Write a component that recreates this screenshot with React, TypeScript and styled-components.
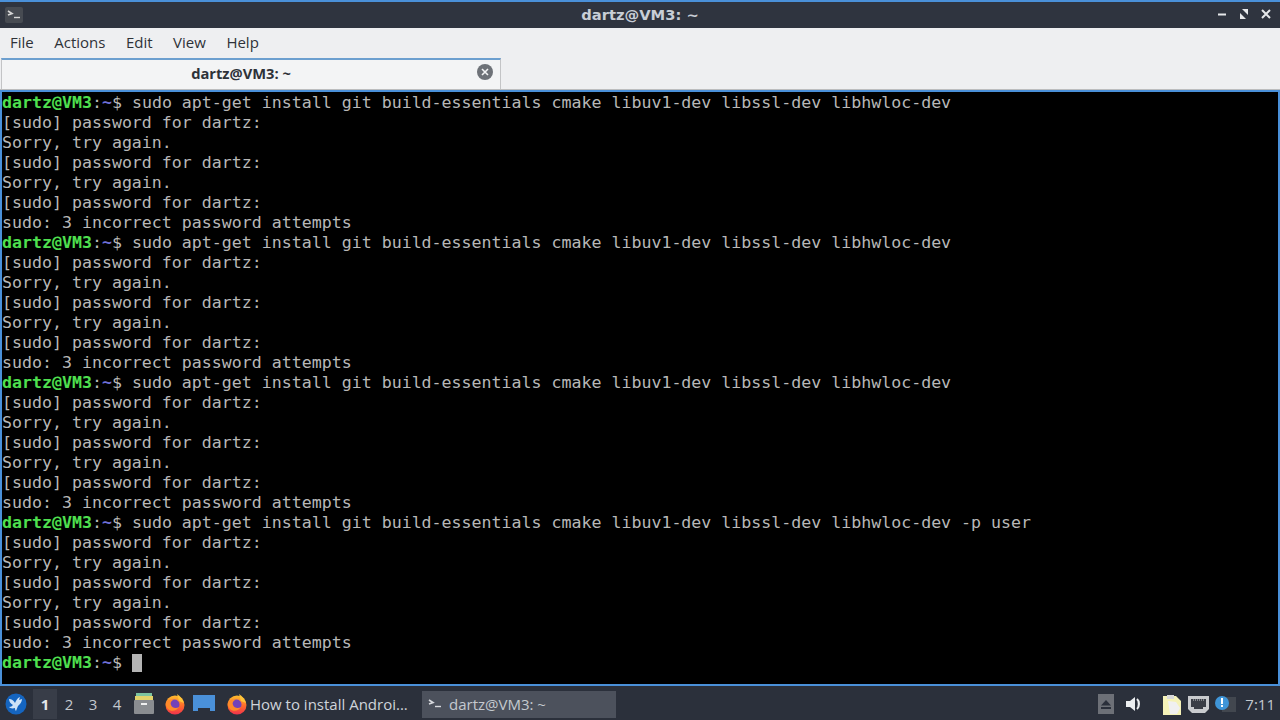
import React from "react";
import styled, { createGlobalStyle } from "styled-components";

const Global = createGlobalStyle`
  html, body { margin: 0; padding: 0; width: 1280px; height: 720px; overflow: hidden; background: #2b303b; }
  #root { width: 1280px; height: 720px; }
`;

const Page = styled.div`
  width: 1280px; height: 720px; display: flex; flex-direction: column;
  font-family: "Open Sans", "Noto Sans", sans-serif; overflow: hidden;
`;
const TitleBar = styled.header`
  height: 26px; flex: none; background: #2f343f; border-top: 2px solid #4a90d9;
  display: grid; grid-template-columns: 1fr auto 1fr; align-items: center; color: #d3dae3;
`;
const AppIconBox = styled.div`
  width: 18px; height: 16px; margin-left: 5px; background: #474b52; border-radius: 2px;
  display: flex; align-items: center; justify-content: center;
`;
const TitleText = styled.div`
  font-family: "DejaVu Sans", sans-serif; font-size: 14.7px; font-weight: 700; color: #c8ced6;
  transform: translateY(-1px);
`;
const WinButtons = styled.div`display: flex; justify-content: flex-end; gap: 6px; padding-right: 6px; transform: translateY(-1px);`;
const MenuBar = styled.nav`
  height: 30px; flex: none; background: #eeeff1; display: flex; align-items: center;
  padding-left: 10px; gap: 20.5px; font-size: 15px; color: #2e3238;
`;
const MenuItem = styled.span`display: block; transform: translateY(-1px);`;
const TabStrip = styled.div`
  height: 32px; flex: none; background: #eeeff1; display: flex; align-items: stretch;
  border-bottom: 1px solid #bcbdbe; box-sizing: border-box;
`;
const Tab = styled.div`
  width: 500px; margin-left: 1px; box-sizing: border-box; background: #f3f4f5;
  border: 1px solid #c3c4c6; border-top: 2px solid #6c9fcf; border-bottom: none;
  display: flex; align-items: center; justify-content: center; position: relative;
  font-size: 14.7px; font-weight: 700; color: #2e3238; padding: 0 20px 4px 0;
`;
const TabClose = styled.span`
  position: absolute; right: 7px; top: 4px; width: 16px; height: 16px; display: block;
`;
const Terminal = styled.main`
  flex: none; height: 596px; box-sizing: border-box; background: #000;
  border: 2px solid #4a90d9; padding: 1px 0 0; overflow: hidden;
  font-family: "DejaVu Sans Mono", monospace; font-size: 16.6px; line-height: 20px; color: #b8b8b8;
`;
const Line = styled.div`height: 20px; white-space: pre;`;
const UserHost = styled.span`color: #4fe04f; font-weight: 700;`;
const Colon = styled.span`color: #b8b8b8;`;
const Tilde = styled.span`color: #6f6fd8; font-weight: 700;`;
const Cursor = styled.span`
  display: inline-block; width: 10px; height: 18px; background: #b4b4b4; vertical-align: -4px;
`;
const Taskbar = styled.footer`
  flex: 1; background: #2b303b; display: flex; align-items: center; color: #cfd4da; font-size: 15px;
  min-height: 0; padding-top: 2px;
`;
const Pager = styled.div`display: flex; margin-left: 6px;`;
const Desk = styled.span<{ $on?: boolean }>`
  width: 24px; height: 30px; display: flex; align-items: center; justify-content: center;
  font-size: 15px; font-weight: ${(p) => (p.$on ? 700 : 400)};
  background: ${(p) => (p.$on ? "#383d48" : "transparent")};
  color: ${(p) => (p.$on ? "#e4e7ea" : "#c4c9cf")};
`;
const Launchers = styled.div`display: flex; align-items: center; gap: 7px; margin-left: 5px;`;
const Cabinet = styled.svg`margin-right: 3px;`;
const TaskButton = styled.div<{ $on?: boolean }>`
  height: 27px; display: flex; align-items: center; white-space: nowrap; box-sizing: border-box;
  background: ${(p) => (p.$on ? "#4c515c" : "transparent")};
  color: ${(p) => (p.$on ? "#c4c9cf" : "#cfd4da")};
  width: ${(p) => (p.$on ? "194px" : "186px")};
  gap: ${(p) => (p.$on ? "7px" : "2px")};
  padding-left: ${(p) => (p.$on ? "6px" : "0")};
`;
const Tray = styled.div`margin-left: auto; display: flex; align-items: center;`;
const Clock = styled.span`font-size: 15px; color: #c4c9cf; margin: 0 5px 0 9px;`;
const EjectBox = styled.div`
  width: 16px; height: 20px; background: #6d7077; display: flex; align-items: center; justify-content: center; margin-right: 12px;
`;
const Gap = styled.span<{ $w: number }>`display: block; flex: none; width: ${(p) => p.$w}px;`;

const Prompt: React.FC<{ cmd?: string; cursor?: boolean }> = ({ cmd = "", cursor }) => (
  <Line>
    <UserHost>dartz@VM3</UserHost><Colon>:</Colon><Tilde>~</Tilde>$ {cmd}{cursor && <Cursor />}
  </Line>
);

const CMD = "sudo apt-get install git build-essentials cmake libuv1-dev libssl-dev libhwloc-dev";
const Attempts = () => (
  <>
    <Line>[sudo] password for dartz:</Line>
    <Line>Sorry, try again.</Line>
    <Line>[sudo] password for dartz:</Line>
    <Line>Sorry, try again.</Line>
    <Line>[sudo] password for dartz:</Line>
    <Line>sudo: 3 incorrect password attempts</Line>
  </>
);

const TermIcon = ({ c = "#e8e8e8" }: { c?: string }) => (
  <svg width="14" height="10" viewBox="0 0 14 10" fill="none">
    <path d="M1 1l4 2.5L1 5" stroke={c} strokeWidth="1.6" />
    <path d="M7 7.5h6" stroke={c} strokeWidth="1.4" />
  </svg>
);
const Firefox = ({ id }: { id: string }) => (
  <svg width="22" height="22" viewBox="0 0 22 22">
    <defs>
      <linearGradient id={id} x1="0" y1="0" x2="0" y2="1">
        <stop offset="0" stopColor="#ffbd2e" />
        <stop offset="0.55" stopColor="#ff6a2b" />
        <stop offset="1" stopColor="#f0324c" />
      </linearGradient>
    </defs>
    <circle cx="11" cy="12" r="9.5" fill={`url(#${id})`} />
    <path d="M13 1c3 2 6 5 7 9l-5-2z" fill="#ffc43a" />
    <circle cx="10.5" cy="11.5" r="5" fill="#7442b8" />
    <path d="M2 9c2-2 5-3 7-2-2 1-3 3-2 5 1 3 5 4 8 2-2 4-8 5-11 2-2-2-3-5-2-7z" fill="#ff8a2a" />
  </svg>
);

export default function App() {
  return (
    <Page>
      <Global />
      <TitleBar>
        <AppIconBox><TermIcon c="#d8d8d8" /></AppIconBox>
        <TitleText>dartz@VM3: ~</TitleText>
        <WinButtons>
          <svg width="16" height="16" viewBox="0 0 16 16"><path d="M4 8.5h8" stroke="#e6e8ea" strokeWidth="2" /></svg>
          <svg width="16" height="16" viewBox="0 0 16 16" fill="#e6e8ea"><path d="M4 7v6h6z" /><path d="M12 9V3H6z" /></svg>
          <svg width="16" height="16" viewBox="0 0 16 16"><path d="M4 4l8 8M12 4l-8 8" stroke="#e6e8ea" strokeWidth="2" /></svg>
        </WinButtons>
      </TitleBar>
      <MenuBar>
        <MenuItem>File</MenuItem>
        <MenuItem>Actions</MenuItem>
        <MenuItem>Edit</MenuItem>
        <MenuItem>View</MenuItem>
        <MenuItem>Help</MenuItem>
      </MenuBar>
      <TabStrip>
        <Tab>
          dartz@VM3: ~
          <TabClose>
            <svg width="16" height="16" viewBox="0 0 16 16">
              <circle cx="8" cy="8" r="8" fill="#6e7278" />
              <path d="M5 5l6 6M11 5l-6 6" stroke="#f3f4f5" strokeWidth="1.6" />
            </svg>
          </TabClose>
        </Tab>
      </TabStrip>
      <Terminal>
        <Prompt cmd={CMD} />
        <Attempts />
        <Prompt cmd={CMD} />
        <Attempts />
        <Prompt cmd={CMD} />
        <Attempts />
        <Prompt cmd={CMD + " -p user"} />
        <Attempts />
        <Prompt cursor />
      </Terminal>
      <Taskbar>
        <Gap $w={5} />
        <svg width="22" height="22" viewBox="0 0 22 22">
          <circle cx="11" cy="11" r="10.5" fill="#1565c0" />
          <path d="M4 6c3 0 5 2 6 4 1-2 2-5 5-6l-1 3 3-1c0 3-2 5-4 7l-2 5c-1-1-1-2-1-3-3 1-5 0-6-1 2 0 3-1 4-2-2-1-4-3-4-6z" fill="#cfe3f7" />
        </svg>
        <Pager>
          <Desk $on>1</Desk>
          <Desk>2</Desk>
          <Desk>3</Desk>
          <Desk>4</Desk>
        </Pager>
        <Launchers>
          <Cabinet width="20" height="24" viewBox="0 0 20 24">
            <rect x="2" y="1" width="16" height="5" fill="#7cc4a0" />
            <rect x="1" y="4" width="18" height="5" fill="#e2d36b" />
            <rect x="0" y="8" width="20" height="14" rx="1" fill="#8a8d91" />
            <rect x="7" y="11" width="6" height="2" fill="#f0f0f0" />
          </Cabinet>
          <Firefox id="ffa" />
          <svg width="22" height="18" viewBox="0 0 22 18">
            <path d="M0 0h22v16h-5v-3H5v3H0z" fill="#4a90d9" />
          </svg>
        </Launchers>
        <Gap $w={11} />
        <TaskButton>
          <Firefox id="ffb" />
          How to install Androi...
        </TaskButton>
        <Gap $w={10} />
        <TaskButton $on>
          <TermIcon c="#d8dade" />
          dartz@VM3: ~
        </TaskButton>
        <Tray>
          <EjectBox>
            <svg width="10" height="9" viewBox="0 0 10 9" fill="#2b303b"><path d="M5 0l5 5.5H0z" /><rect y="7" width="10" height="2" /></svg>
          </EjectBox>
          <svg width="18" height="16" viewBox="0 0 18 16" fill="#eceef0">
            <path d="M0 5h4l5-4v14l-5-4H0z" />
            <path d="M11 3c2.5 2 2.5 8 0 10" stroke="#eceef0" strokeWidth="2.2" fill="none" />
          </svg>
          <Gap $w={18} />
          <svg width="20" height="24" viewBox="0 0 20 24">
            <path d="M1 4h13l5 5v14H1z" fill="#f5f2b8" />
            <path d="M5 3h7v4H5z" fill="#d8d8d8" />
            <path d="M6 9l8 1 4 6-3 6H8z" fill="#f0f0f0" />
          </svg>
          <Gap $w={6} />
          <svg width="21" height="19" viewBox="0 0 21 19">
            <path d="M0 1h21v13l-4 4H4l-4-4z" fill="#c9cbce" />
            <path d="M3 4h15v8h-3v2H6v-2H3z" fill="#3a3e46" />
            <path d="M5 5h11" stroke="#c9cbce" strokeWidth="1" strokeDasharray="1 1" />
          </svg>
          <Gap $w={5} />
          <svg width="22" height="20" viewBox="0 0 22 20">
            <rect x="8" y="3" width="14" height="15" fill="#42474f" />
            <circle cx="8" cy="9" r="7" fill="#3f95d8" />
            <rect x="7" y="4" width="2" height="6" fill="#fff" />
            <rect x="7" y="11" width="2" height="2" fill="#fff" />
          </svg>
          <Clock>7:11</Clock>
        </Tray>
      </Taskbar>
    </Page>
  );
}
